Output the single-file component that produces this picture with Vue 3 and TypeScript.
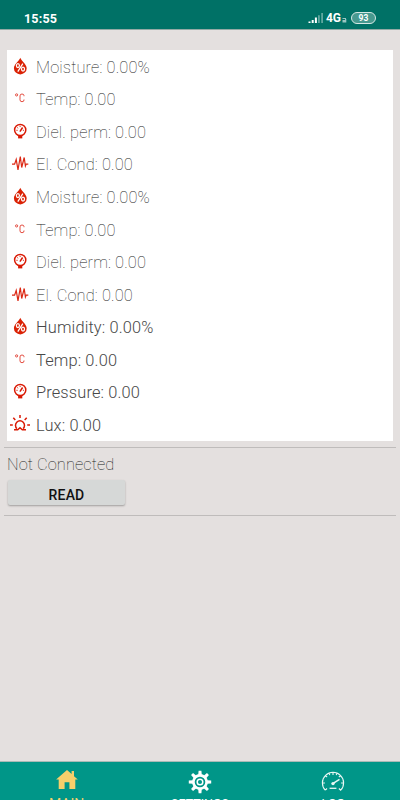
<script setup lang="ts">
type IconName = 'drop' | 'celsius' | 'gauge' | 'pulse' | 'sun'

interface Reading {
  icon: IconName
  label: string
  air?: boolean
}

const readings: Reading[] = [
  { icon: 'drop', label: 'Moisture: 0.00%' },
  { icon: 'celsius', label: 'Temp: 0.00' },
  { icon: 'gauge', label: 'Diel. perm: 0.00' },
  { icon: 'pulse', label: 'El. Cond: 0.00' },
  { icon: 'drop', label: 'Moisture: 0.00%' },
  { icon: 'celsius', label: 'Temp: 0.00' },
  { icon: 'gauge', label: 'Diel. perm: 0.00' },
  { icon: 'pulse', label: 'El. Cond: 0.00' },
  { icon: 'drop', label: 'Humidity: 0.00%', air: true },
  { icon: 'celsius', label: 'Temp: 0.00', air: true },
  { icon: 'gauge', label: 'Pressure: 0.00', air: true },
  { icon: 'sun', label: 'Lux: 0.00', air: true },
]

const teeth = [0, 45, 90, 135, 180, 225, 270, 315]
</script>

<template>
  <div class="screen">
    <header class="status">
      <span class="clock">15:55</span>
      <div class="indicators">
        <svg class="signal" width="16" height="12" viewBox="0 0 16 12">
          <path d="M.5 9.5h2V11h-2zM3.7 8h2v3h-2zM6.9 5.5h2V11h-2z" fill="#fff" />
          <path d="M10 3.2h1.8V11H10zM13.2 1H15v10h-1.8z" fill="#fff" opacity=".38" />
        </svg>
        <span class="net">4G</span>
        <svg class="arrows" width="5" height="6" viewBox="0 0 5 6">
          <path d="M.5 1h3.5v1H.5zM3 2h1.3v3.4H3zM.5 3H3v2.4H.5z" fill="#fff" opacity=".6" />
        </svg>
        <span class="battery">93</span>
      </div>
    </header>

    <main class="content">
      <section class="card">
        <div v-for="(r, i) in readings" :key="i" class="row" :class="{ air: r.air }">
          <svg class="icon" width="24" height="24" viewBox="0 0 24 24">
            <g v-if="r.icon === 'drop'">
              <path d="M12.3 2.8C11.1 6.1 5.9 9.4 5.9 13.2a6.4 6.2 0 0 0 12.8 0C18.7 9.4 13.5 6.1 12.3 2.8z" fill="#da2205" />
              <g fill="none" stroke="#fff" stroke-width="1.25">
                <ellipse cx="9.9" cy="10.6" rx="1.5" ry="1.9" />
                <ellipse cx="15" cy="14.1" rx="1.5" ry="1.9" />
                <path d="M14.8 8.6 9.8 16.6" />
              </g>
            </g>
            <g v-else-if="r.icon === 'celsius'" fill="none" stroke="#e03a2c" stroke-width=".9">
              <circle cx="8.6" cy="7.9" r="1.1" />
              <path d="M16 9.2V8.7q0-1.7-2-1.7t-2 1.9v3.9q0 1.9 2 1.9t2-1.7v-.5" />
            </g>
            <g v-else-if="r.icon === 'gauge'" fill="none" stroke="#da1a05">
              <circle cx="12.2" cy="10" r="5.6" stroke-width="1.5" />
              <path d="M11.9 11.7 14.6 7.5" stroke-width="1.5" />
              <path d="M8.4 10.3h1.2M9.3 7.5l.9.8M12.1 6.1v1M14.9 10.3h1" stroke-width="1" />
              <path d="M10.1 16h4.2v2.4h-4.2z" fill="#da1a05" stroke="none" />
            </g>
            <path
              v-else-if="r.icon === 'pulse'"
              d="M4 12.1H6.6L8.2 7.5 10 17.8 12.3 4.5 13.7 15.5 16.2 5.5 17.4 14 18.2 12.1H20.3"
              fill="none" stroke="#dc2814" stroke-width="1.2"
            />
            <g v-else fill="none" stroke="#da1a05" stroke-width="1.5">
              <path d="M8.9 15.6A4.5 4.5 0 1 1 15.1 15.6" />
              <path d="M2 12.1h2.8M19.2 12.1H22M12 2v3M5.3 4.8l2 2.2M18.7 4.8l-2 2.2M6 16.8h3.7L12 14.8l2.3 2H18" />
            </g>
          </svg>
          <span class="label">{{ r.label }}</span>
        </div>
      </section>

      <section class="connection">
        <p class="state">Not Connected</p>
        <button class="read" type="button">READ</button>
      </section>
    </main>

    <nav class="tabs">
      <a class="tab active">
        <svg width="24" height="24" viewBox="0 0 24 24">
          <path d="M12 0 1.1 9.6H3.7V19.1H9.6V12.3H14.4V19.1H20.3V9.6H22.8L19 6.2V1.1H16.6V4z" fill="#f6cf6b" />
        </svg>
        <span>MAIN</span>
      </a>
      <a class="tab">
        <svg width="24" height="24" viewBox="0 0 24 24">
          <g fill="#fff">
            <path v-for="a in teeth" :key="a" d="M10.2 5 10.6 .8h2.8l.4 4.2z" :transform="`rotate(${a} 12 12)`" />
          </g>
          <circle cx="12" cy="12" r="6.6" fill="none" stroke="#fff" stroke-width="2.6" />
          <circle cx="12" cy="12" r="2.8" fill="none" stroke="#fff" stroke-width="1.5" />
        </svg>
        <span>SETTINGS</span>
      </a>
      <a class="tab">
        <svg width="24" height="24" viewBox="0 0 24 24">
          <g fill="none" stroke="#e9f7f4" stroke-width="1.1">
            <path d="M4.3 20.2A10.6 10.6 0 1 1 19.7 20.2L17.9 18.5M4.3 20.2 6 18.5M1.5 13h2.4M22.5 13h-2.4M12 2.4v2.5M4.4 5.4l1.7 1.7M19.6 5.4l-1.7 1.7M8 3.3l.8 1.8M16 3.3l-.8 1.8" />
            <path d="M12.5 13.2 18.5 9.3" stroke-width="1.5" />
            <path d="M8.6 18.3h6.8" stroke-width="1.3" />
          </g>
          <circle cx="12" cy="13.6" r="1.7" fill="#e9f7f4" />
        </svg>
        <span>LOG</span>
      </a>
    </nav>
  </div>
</template>

<style>
body {
  margin: 0;
  overflow: hidden;
}
</style>

<style scoped>
.screen {
  display: flex;
  flex-direction: column;
  width: 400px;
  height: 800px;
  overflow: hidden;
  background: #e4e0df;
  font-family: Roboto, "Liberation Sans", sans-serif;
}
.status {
  display: flex;
  flex: none;
  justify-content: space-between;
  align-items: center;
  box-sizing: border-box;
  height: 30px;
  padding: 7px 24px 0;
  border-bottom: 1px solid #94aaa5;
  background: #007166;
  color: #fff;
}
.clock {
  font-size: 12.5px;
  font-weight: 700;
  letter-spacing: 0.2px;
}
.indicators {
  display: flex;
  align-items: center;
}
.signal {
  margin-right: 2px;
}
.net {
  font-size: 12px;
  font-weight: 700;
}
.arrows {
  margin: 4px 4px 0 1px;
}
.battery {
  box-sizing: border-box;
  width: 25px;
  height: 12px;
  border: 1.5px solid #d5e7e4;
  border-radius: 6px;
  background: #47998f;
  font-size: 8.5px;
  font-weight: 700;
  line-height: 10px;
  text-align: center;
}
.content {
  flex: 1;
  padding: 20px 4px 0;
}
.card {
  display: grid;
  grid-template-rows: repeat(12, 32.56px);
  margin: 0 3px;
  box-sizing: border-box;
  height: 391px;
  width: 386px;
  background: #fff;
}
.row {
  display: flex;
  align-items: center;
  padding: 1px 0 0 1px;
  color: #202020;
  font-size: 16.4px;
  letter-spacing: 0.14px;
}
.icon {
  flex: none;
  margin-right: 4px;
}
.label {
  padding-top: 1px;
  font-weight: 100;
  white-space: nowrap;
}
.air .label {
  font-weight: 300;
  color: #484848;
}
.connection {
  margin-top: 6px;
  height: 67px;
  border-top: 1px solid #bfbcbb;
  border-bottom: 1px solid #bfbcbb;
}
.state {
  margin: 7px 0 0 3px;
  color: #202020;
  font-size: 16.4px;
  font-weight: 100;
  letter-spacing: 0.08px;
  line-height: 19px;
}
.read {
  display: block;
  width: 117px;
  height: 25px;
  margin: 6px 0 0 4px;
  padding: 4px 0 0;
  border: 0;
  border-radius: 2px;
  background: #d6d8d7;
  box-shadow: 0 1px 2px rgba(0, 0, 0, 0.3);
  color: #111;
  font: 500 14px Roboto, "Liberation Sans", sans-serif;
  letter-spacing: 0.2px;
}
.tabs {
  display: flex;
  flex: none;
  box-sizing: border-box;
  height: 39px;
  border-top: 1px solid #a9bab6;
  background: #009688;
}
.tab {
  display: flex;
  flex: 1;
  flex-direction: column;
  align-items: center;
  padding-top: 8px;
  color: #fff;
  font-size: 12.5px;
  line-height: 14px;
}
.tab svg {
  flex: none;
}
.tab span {
  margin-top: 3px;
}
.active {
  color: #f6cf6b;
}
.active span {
  font-size: 14px;
}
</style>
